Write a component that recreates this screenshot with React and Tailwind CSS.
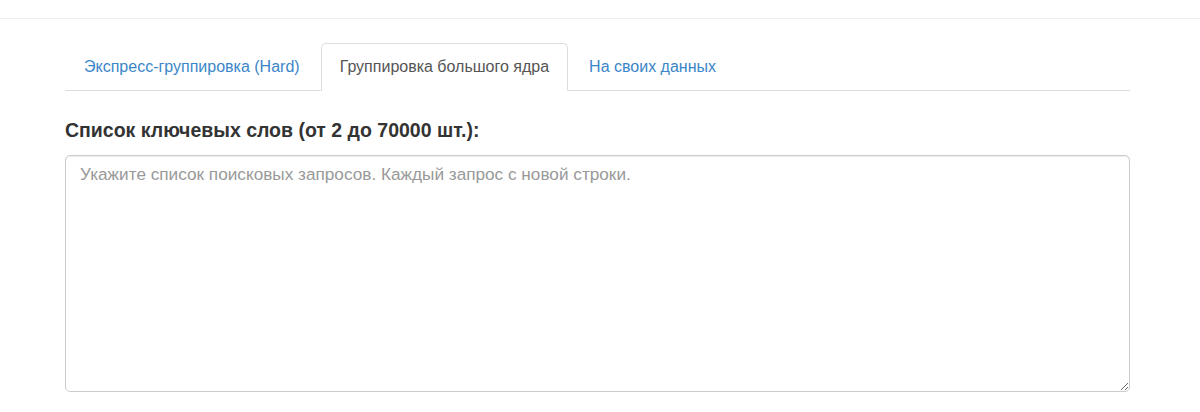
import React, { useState } from "react";

const tabs = [
  { id: "hard", label: "Экспресс-группировка (Hard)" },
  { id: "big", label: "Группировка большого ядра" },
  { id: "own", label: "На своих данных" },
];

export default function App() {
  const [active, setActive] = useState("big");

  return (
    <div className="w-[1200px] h-[412px] bg-white overflow-hidden font-['Liberation_Sans',Arial,sans-serif]">
      {/* верхняя полоса */}
      <div className="h-[19px] border-b border-[#eeeeee]" />

      <div className="ml-[65px] w-[1065px] pt-[24px]">
        {/* вкладки */}
        <div className="flex border-b border-[#dddddd] h-[48px]">
          {tabs.map((t) => (
            <button
              key={t.id}
              onClick={() => setActive(t.id)}
              className={`mr-[2px] px-[18px] text-[16px] leading-none rounded-t-[5px] border -mb-px ${
                active === t.id
                  ? "bg-white text-[#555555] border-[#dddddd] border-b-white"
                  : "text-[#3b86c8] border-transparent"
              }`}
            >
              {t.label}
            </button>
          ))}
        </div>

        {/* форма */}
        <div className="pt-[27px]">
          <label className="block text-[19.5px] font-bold text-[#333333] leading-[24px]">
            Список ключевых слов (от 2 до 70000 шт.):
          </label>
          <textarea
            placeholder="Укажите список поисковых запросов. Каждый запрос с новой строки."
            className="mt-[13px] block w-full h-[237px] border border-[#cccccc] rounded-[5px] px-[14px] py-[6px] text-[17.2px] text-[#555555] placeholder:text-[#999999] outline-none shadow-[inset_0_1px_1px_rgba(0,0,0,0.075)] resize-y"
          />
        </div>
      </div>
    </div>
  );
}
